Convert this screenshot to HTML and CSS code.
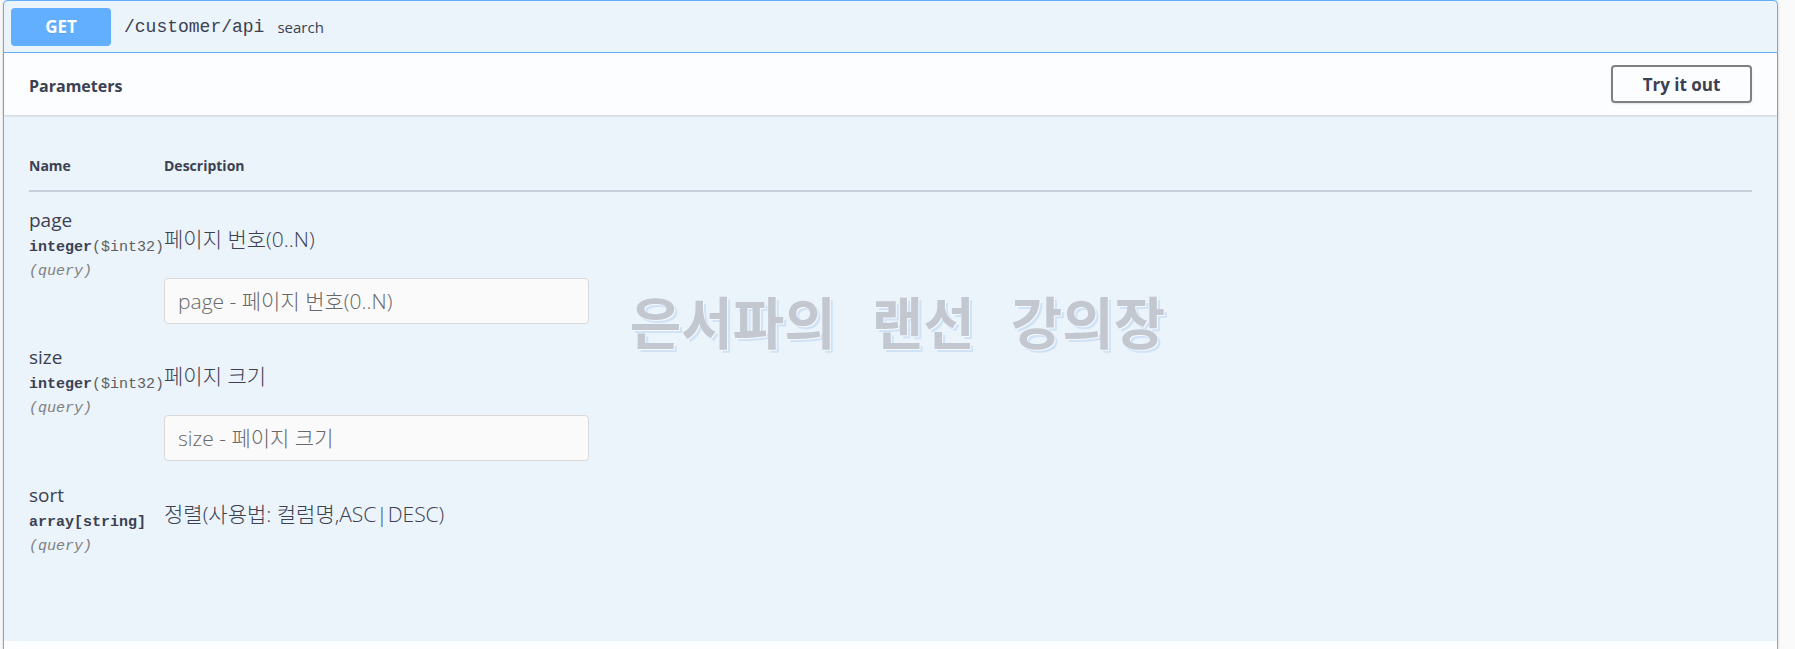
FILE: index.html
```
<!DOCTYPE html>
<html lang="ko">
<head>
<meta charset="utf-8">
<title>GET /customer/api</title>
<link rel="stylesheet" href="styles.css">
</head>
<body>
<main class="opblock">
  <header class="summary">
    <span class="method">GET</span>
    <span class="path">/customer/api</span>
    <span class="summary-text">search</span>
  </header>
  <div class="section-header">
    <h4 class="section-title">Parameters</h4>
    <button class="try-out" type="button">Try it out</button>
  </div>
  <section class="parameters">
    <table class="table">
      <thead>
        <tr><th class="col-name">Name</th><th>Description</th></tr>
      </thead>
      <tbody>
        <tr>
          <td>
            <label class="name" for="page">page</label>
            <div class="type">integer<span class="format">($int32)</span></div>
            <div class="in">(query)</div>
          </td>
          <td>
            <p class="description">페이지 번호(0..N)</p>
            <input class="field" id="page" type="text" placeholder="page - 페이지 번호(0..N)">
          </td>
        </tr>
        <tr>
          <td>
            <label class="name" for="size">size</label>
            <div class="type">integer<span class="format">($int32)</span></div>
            <div class="in">(query)</div>
          </td>
          <td>
            <p class="description">페이지 크기</p>
            <input class="field" id="size" type="text" placeholder="size - 페이지 크기">
          </td>
        </tr>
        <tr>
          <td>
            <div class="name">sort</div>
            <div class="type">array[string]</div>
            <div class="in">(query)</div>
          </td>
          <td>
            <p class="description">정렬(사용법: 컬럼명,ASC|DESC)</p>
          </td>
        </tr>
      </tbody>
    </table>
    <div class="watermark"><span>은서파의</span><span>랜선</span><span>강의장</span></div>
  </section>
  <div class="responses"></div>
</main>
</body>
</html>
```
FILE: styles.css
```
* { box-sizing: border-box; }
body {
  margin: 0;
  background: #fafafa;
  color: #3b4151;
  font-family: "Open Sans", "Noto Sans CJK KR", sans-serif;
}
.opblock {
  display: flex;
  flex-direction: column;
  min-height: 100vh;
  margin: 0 17px 0 3px;
  border: 1px solid #61affe;
  border-bottom: 0;
  border-radius: 5px 5px 0 0;
  background: #ebf3fb;
  box-shadow: 0 0 3px rgba(0, 0, 0, .19);
}
.summary {
  display: flex;
  align-items: center;
  height: 52px;
  padding: 0 7px;
  border-bottom: 1px solid #61affe;
}
.method {
  width: 100px;
  border-radius: 4px;
  background: #61affe;
  color: #fff;
  font-size: 17px;
  font-weight: 700;
  line-height: 38px;
  text-align: center;
  text-shadow: 0 1px 0 rgba(0, 0, 0, .1);
}
.path {
  padding: 0 13px;
  font-family: "Liberation Mono", monospace;
  font-size: 18px;
}
.summary-text { font-size: 15px; }
.section-header {
  display: flex;
  align-items: center;
  justify-content: space-between;
  min-height: 62px;
  padding: 0 25px;
  background: #fcfdff;
  box-shadow: 0 1px 2px rgba(0, 0, 0, .15);
}
.section-title { margin: 0; padding-top: 3px; font-size: 16px; }
.try-out {
  width: 141px;
  height: 38px;
  border: 2px solid #808080;
  border-radius: 4px;
  background: transparent;
  box-shadow: 0 1px 2px rgba(0, 0, 0, .1);
  color: #3b4151;
  font-family: inherit;
  font-size: 17px;
  font-weight: 700;
}
.parameters { position: relative; padding: 25px 25px 36px; }
.table { width: 100%; border-collapse: collapse; table-layout: fixed; }
th {
  height: 51px;
  padding: 0;
  border-bottom: 2px solid #c6cfda;
  font-size: 14px;
  text-align: left;
}
.col-name { width: 135px; }
td { height: 138px; padding: 16px 0 0; vertical-align: top; }
.name { display: block; font-size: 19px; line-height: 24px; }
.type, .in {
  font-family: "Liberation Mono", monospace;
  font-size: 15px;
  font-weight: 700;
  line-height: 24px;
  white-space: nowrap;
}
.type { padding-top: 4px; }
.format { color: #606060; font-weight: 400; }
.in { color: #808080; font-style: italic; font-weight: 400; }
.description {
  margin: 16px 0 24px;
  font-size: 21px;
  font-weight: 300;
  line-height: 30px;
}
.field {
  display: block;
  width: 425px;
  height: 46px;
  padding: 0 13px;
  border: 1px solid #d9d9d9;
  border-radius: 4px;
  background: #fafafa;
  font-family: inherit;
  font-size: 21px;
  font-weight: 300;
}
.field::placeholder { color: #686868; }
.responses { flex: 1; background: #fcfdff; }
.watermark {
  position: absolute;
  top: 160px;
  left: 14px;
  right: 0;
  display: flex;
  justify-content: center;
  gap: 36px;
  color: #c3c8d0;
  font-family: "Noto Sans CJK KR", sans-serif;
  font-size: 56px;
  font-weight: 700;
  line-height: 90px;
  text-shadow: 1px 1px 0 #f6f9fd, 3px 3px 0 #cfe2f6;
  pointer-events: none;
}
```
